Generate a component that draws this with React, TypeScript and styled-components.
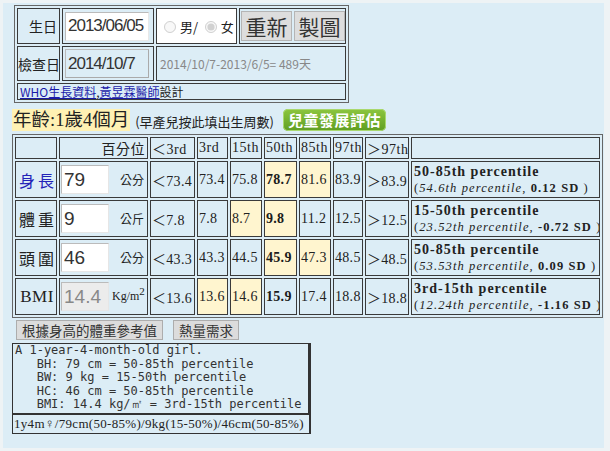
import { FC } from 'react';
import styled, { createGlobalStyle } from 'styled-components';

const GlobalStyle = createGlobalStyle`
  html, body {
    margin: 0;
    padding: 0;
    background: #eef3f5;
  }
  body {
    font-family: "Liberation Sans", "Noto Sans CJK TC", sans-serif;
    color: #222;
  }
`;

const serif = `"Liberation Serif", "Noto Sans CJK TC", serif`;
const cjk = `"Noto Sans CJK TC", "Liberation Sans", sans-serif`;

interface Row {
  label: string;
  link?: boolean;
  value: string;
  unit: React.ReactNode;
  disabled?: boolean;
  cells: string[];
  hot: number[];
  range: string;
  pct: string;
  sd: string;
}

const rows: Row[] = [
  {
    label: '身長',
    link: true,
    value: '79',
    unit: '公分',
    cells: ['＜73.4', '73.4', '75.8', '78.7', '81.6', '83.9', '＞83.9'],
    hot: [3, 4],
    range: '50-85th percentile',
    pct: '54.6th percentile,',
    sd: '0.12 SD',
  },
  {
    label: '體重',
    value: '9',
    unit: '公斤',
    cells: ['＜7.8', '7.8', '8.7', '9.8', '11.2', '12.5', '＞12.5'],
    hot: [2, 3],
    range: '15-50th percentile',
    pct: '23.52th percentile,',
    sd: '-0.72 SD',
  },
  {
    label: '頭圍',
    value: '46',
    unit: '公分',
    cells: ['＜43.3', '43.3', '44.5', '45.9', '47.3', '48.5', '＞48.5'],
    hot: [3, 4],
    range: '50-85th percentile',
    pct: '53.53th percentile,',
    sd: '0.09 SD',
  },
  {
    label: 'BMI',
    value: '14.4',
    disabled: true,
    unit: (
      <>
        Kg/m<sup>2</sup>
      </>
    ),
    cells: ['＜13.6', '13.6', '14.6', '15.9', '17.4', '18.8', '＞18.8'],
    hot: [1, 2],
    range: '3rd-15th percentile',
    pct: '12.24th percentile,',
    sd: '-1.16 SD',
  },
];

const headers = ['＜3rd', '3rd', '15th', '50th', '85th', '97th', '＞97th'];
const colWidths = [42, 89, 45, 31, 32, 33, 32, 30, 44, 189];

const App: FC = () => {
  return (
    <>
      <GlobalStyle />
      <Panel>
        <TopTable>
          <colgroup>
            <Col $w={43} />
            <Col $w={92} />
            <Col $w={81} />
            <Col $w={107} />
          </colgroup>
          <tbody>
            <tr>
              <LabelCell>生日</LabelCell>
              <InputCell>
                <DateInput defaultValue="2013/06/05" />
              </InputCell>
              <RadioCell>
                <Radio type="radio" disabled /> 男/ <Radio type="radio" disabled defaultChecked /> 女
              </RadioCell>
              <ButtonCell>
                <ButtonPair>
                  <BigButton>重新</BigButton>
                  <BigButton>製圖</BigButton>
                </ButtonPair>
              </ButtonCell>
            </tr>
            <tr>
              <LabelCell>檢查日</LabelCell>
              <InputCell>
                <DateInput defaultValue="2014/10/7" $muted />
              </InputCell>
              <DiffCell colSpan={2}>2014/10/7-2013/6/5= 489天</DiffCell>
            </tr>
            <tr>
              <CreditCell colSpan={4}>
                <Link href="#">WHO生長資料</Link>,<Link href="#">黃昱霖醫師</Link>設計
              </CreditCell>
            </tr>
          </tbody>
        </TopTable>

        <AgeLine>
          <Age>年齡:1歲4個月</Age>
          <Preterm>(早產兒按此填出生周數)</Preterm>
          <GreenButton>兒童發展評估</GreenButton>
        </AgeLine>

        <GrowthTable>
          <colgroup>
            {colWidths.map((w, i) => (
              <Col key={i} $w={w} />
            ))}
          </colgroup>
          <tbody>
            <HeadRow>
              <td />
              <PctCell>百分位</PctCell>
              {headers.map((h) => (
                <td key={h}>{h}</td>
              ))}
              <td />
            </HeadRow>
            {rows.map((r) => (
              <DataRow key={r.label}>
                <NameCell $link={r.link} $latin={r.label === 'BMI'}>
                  {r.label}
                </NameCell>
                <td>
                  <ValueBox>
                    <SmallInput defaultValue={r.value} disabled={r.disabled} />
                    <Unit $latin={r.label === 'BMI'}>{r.unit}</Unit>
                  </ValueBox>
                </td>
                {r.cells.map((c, i) => (
                  <NumCell key={i} $hot={r.hot.includes(i)} $bold={i === 3}>
                    {c}
                  </NumCell>
                ))}
                <ResultCell>
                  <Range>{r.range}</Range>
                  <Detail>
                    (<i>{r.pct}</i> <b>{r.sd}</b> )
                  </Detail>
                </ResultCell>
              </DataRow>
            ))}
          </tbody>
        </GrowthTable>

        <ToolRow>
          <GreyButton>根據身高的體重參考值</GreyButton>
          <GreyButton>熱量需求</GreyButton>
        </ToolRow>

        <Summary>
          {`A 1-year-4-month-old girl.
   BH: 79 cm = 50-85th percentile
   BW: 9 kg = 15-50th percentile
   HC: 46 cm = 50-85th percentile
   BMI: 14.4 kg/㎡ = 3rd-15th percentile`}
        </Summary>
        <ShortLine>1y4m♀/79cm(50-85%)/9kg(15-50%)/46cm(50-85%)</ShortLine>
      </Panel>
    </>
  );
};

export default App;

const Panel = styled.div`
  box-sizing: border-box;
  margin: 3px;
  width: 601px;
  height: 445px;
  background: #dcedf6;
  padding: 2px 0 0 9px;
  display: flex;
  flex-direction: column;
  align-items: flex-start;
`;

const Col = styled.col<{ $w: number }>`
  width: ${(p) => p.$w}px;
`;

const TopTable = styled.table`
  table-layout: fixed;
  width: 335px;
  margin-left: 2px;
  border: 1px solid #666;
  border-spacing: 2px;

  td {
    box-sizing: border-box;
    border: 1px solid #3a3a3a;
    padding: 0;
  }
`;

const LabelCell = styled.td`
  height: 35px;
  text-align: right;
  font-family: ${cjk};
  font-size: 14px;
  padding-right: 2px !important;
  white-space: nowrap;
`;

const InputCell = styled.td`
  padding: 2px !important;
`;

const DateInput = styled.input<{ $muted?: boolean }>`
  box-sizing: border-box;
  width: 84px;
  height: 29px;
  border: 1px solid ${(p) => (p.$muted ? '#aaa' : '#e8e8e8')};
  border-top-color: #bbb;
  border-left-color: #bbb;
  background: ${(p) => (p.$muted ? '#dcedf6' : '#fff')};
  font-family: "Liberation Sans", sans-serif;
  font-size: 17px;
  letter-spacing: -1px;
  color: #333;
  padding: 0 2px;
`;

const RadioCell = styled.td`
  background: #fff;
  font-family: ${cjk};
  font-size: 13px;
  white-space: nowrap;
  padding-left: 3px !important;
`;

const Radio = styled.input`
  margin: 0 1px 0 4px;
  width: 12px;
  height: 12px;
  vertical-align: -1px;
`;

const ButtonCell = styled.td`
  padding: 2px 1px !important;
`;

const ButtonPair = styled.div`
  display: flex;
  gap: 2px;
`;

const BigButton = styled.button`
  flex: 0 0 51px;
  box-sizing: border-box;
  width: 51px;
  height: 30px;
  padding: 0;
  font-family: ${cjk};
  font-size: 21px;
  line-height: 26px;
  white-space: nowrap;
  color: #333;
  background: #dddddd;
  border: 1px solid #b5b5b5;
`;

const DiffCell = styled.td`
  font-family: ${cjk};
  font-size: 12px;
  color: #888;
  padding-left: 3px !important;
  white-space: nowrap;
`;

const CreditCell = styled.td`
  height: 16px;
  font-family: ${cjk};
  font-size: 12px;
  line-height: 15px;
  padding-left: 2px !important;
`;

const Link = styled.a`
  color: #1a1aa8;
  text-decoration: underline;
`;

const AgeLine = styled.div`
  display: flex;
  align-items: center;
  margin-top: 4px;
  height: 26px;
`;

const Age = styled.span`
  font-family: ${serif};
  font-size: 18.5px;
  line-height: 22px;
  background: #fff1b3;
  padding: 0 1px;
`;

const Preterm = styled.span`
  font-family: ${cjk};
  font-size: 13px;
  margin: 2px 0 0 5px;
`;

const GreenButton = styled.span`
  margin-left: 9px;
  padding: 0 5px;
  height: 22px;
  line-height: 22px;
  border-radius: 5px;
  background: linear-gradient(#8cc63f, #5f9e22);
  box-shadow: inset 0 0 0 1px #a9d86e;
  color: #fff;
  font-family: ${cjk};
  font-weight: 700;
  font-size: 15px;
  letter-spacing: 0.5px;
`;

const GrowthTable = styled.table`
  table-layout: fixed;
  width: 591px;
  border: 1px solid #666;
  border-spacing: 2px;
  margin-top: 1px;

  td {
    box-sizing: border-box;
    border: 1px solid #3a3a3a;
    padding: 0 1px;
    white-space: nowrap;
    overflow: hidden;
  }
`;

const HeadRow = styled.tr`
  height: 21px;
  font-family: ${serif};
  font-size: 14px;
  letter-spacing: 0.5px;
`;

const PctCell = styled.td`
  text-align: right;
  font-family: ${cjk};
  font-size: 14px;
  padding-right: 2px !important;
`;

const DataRow = styled.tr`
  height: 37px;
`;

const NameCell = styled.td<{ $link?: boolean; $latin?: boolean }>`
  text-align: center;
  font-family: ${(p) => (p.$latin ? serif : cjk)};
  font-size: ${(p) => (p.$latin ? '17px' : '16px')};
  letter-spacing: ${(p) => (p.$latin ? '0.5px' : '3px')};
  padding-left: 3px !important;
  color: ${(p) => (p.$link ? '#2323b8' : '#222')};
`;

const ValueBox = styled.div`
  display: flex;
  align-items: center;
`;

const SmallInput = styled.input`
  box-sizing: border-box;
  width: 48px;
  height: 29px;
  border: 1px solid #e6e6e6;
  border-top-color: #bbb;
  border-left-color: #bbb;
  background: #fff;
  font-family: "Liberation Sans", sans-serif;
  font-size: 19px;
  color: #333;
  padding: 0 2px;

  &:disabled {
    background: #ececec;
    color: #888;
  }
`;

const Unit = styled.span<{ $latin?: boolean }>`
  margin-left: ${(p) => (p.$latin ? '3px' : '11px')};
  font-family: ${(p) => (p.$latin ? serif : cjk)};
  font-size: 12px;

  sup {
    font-size: 11px;
    line-height: 0;
  }
`;

const NumCell = styled.td<{ $hot?: boolean; $bold?: boolean }>`
  font-family: ${serif};
  font-size: 14px;
  letter-spacing: 0.3px;
  background: ${(p) => (p.$hot ? '#fff5cf' : 'transparent')};
  font-weight: ${(p) => (p.$bold ? 700 : 400)};
  color: ${(p) => (p.$bold ? '#1b1b1b' : '#222')};
`;

const ResultCell = styled.td`
  font-family: ${serif};
  vertical-align: top;
  padding: 1px 2px !important;
`;

const Range = styled.div`
  font-weight: 700;
  font-size: 14px;
  letter-spacing: 1px;
  line-height: 17px;
`;

const Detail = styled.div`
  font-size: 12.5px;
  letter-spacing: 1.1px;
  line-height: 16px;

  i {
    font-style: italic;
  }
  b {
    font-weight: 700;
  }
`;

const ToolRow = styled.div`
  display: flex;
  gap: 10px;
  margin: 2px 0 0 4px;
`;

const GreyButton = styled.button`
  font-family: ${cjk};
  font-size: 13.5px;
  color: #333;
  background: #dcdcdc;
  border: 1px solid #adadad;
  height: 20px;
  line-height: 18px;
  padding: 0 5px;
`;

const Summary = styled.div`
  box-sizing: border-box;
  width: 299px;
  height: 71px;
  margin: 3px 0 0 0;
  padding: 0 2px;
  border: 1px solid #333;
  border-right-width: 3px;
  background: #dcedf6;
  font-family: "DejaVu Sans Mono", monospace;
  font-size: 12px;
  line-height: 13.6px;
  white-space: pre;
  color: #333;
  overflow: hidden;
`;

const ShortLine = styled.div`
  box-sizing: border-box;
  width: 299px;
  height: 20px;
  border: 1px solid #333;
  border-right-width: 2px;
  background: #dcedf6;
  font-family: ${serif};
  font-size: 13px;
  line-height: 18px;
  padding-left: 1px;
  white-space: nowrap;
  letter-spacing: 0.3px;
  color: #222;
`;
